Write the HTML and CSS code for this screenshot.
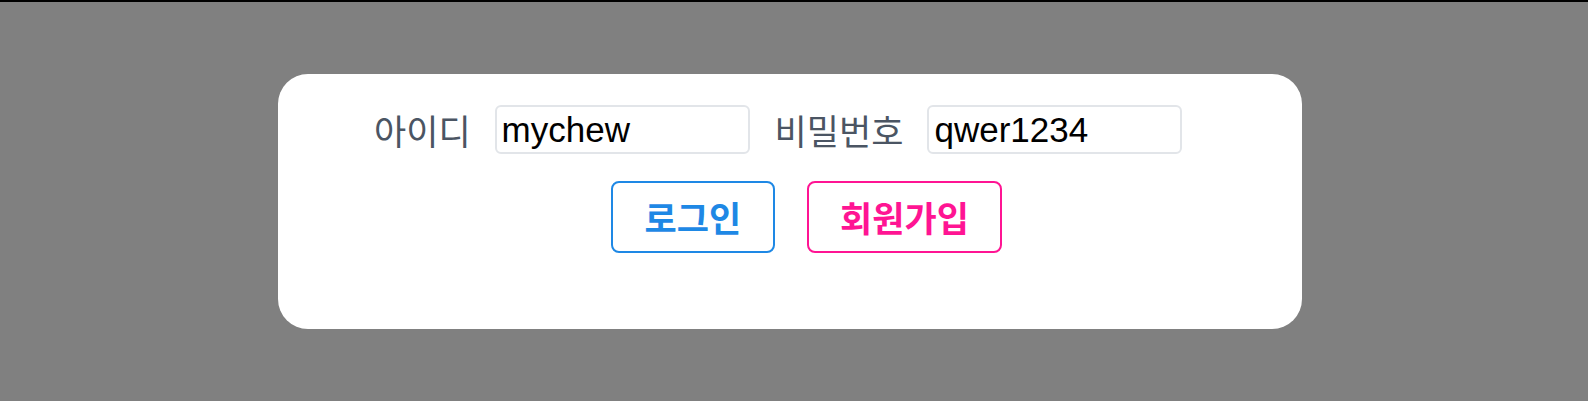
FILE: index.html
```html
<!DOCTYPE html>
<html lang="ko">
<head>
<meta charset="utf-8">
<title>로그인</title>
<link rel="stylesheet" href="styles.css">
</head>
<body>
<div class="topbar"></div>
<main class="stage">
  <form class="card">
    <div class="fields">
      <label class="field">
        <span class="field-label">아이디</span>
        <input class="field-input" type="text" value="mychew">
      </label>
      <label class="field">
        <span class="field-label">비밀번호</span>
        <input class="field-input" type="text" value="qwer1234">
      </label>
    </div>
    <div class="actions">
      <button type="button" class="btn btn-login">로그인</button>
      <button type="button" class="btn btn-signup">회원가입</button>
    </div>
  </form>
</main>
</body>
</html>
```

FILE: styles.css
```css
html, body {
  margin: 0;
  padding: 0;
}

body {
  background: #808080;
  font-family: "Liberation Sans", "Noto Sans CJK KR", sans-serif;
  height: 401px;
  overflow: hidden;
}

.topbar {
  height: 2px;
  background: #000;
}

.stage {
  padding: 72px 0 0 278px;
}

.card {
  box-sizing: border-box;
  width: 1024px;
  height: 255px;
  background: #fff;
  border-radius: 30px;
  padding: 31px 0 0 0;
}

.fields {
  display: flex;
  align-items: center;
  padding-left: 96px;
}

.field {
  display: flex;
  align-items: center;
}

.field + .field {
  margin-left: 25px;
}

.field-label {
  font-family: "Noto Sans CJK KR", sans-serif;
  font-size: 35px;
  line-height: 40px;
  color: #4b5563;
  margin-right: 24px;
}

.field-input {
  box-sizing: border-box;
  width: 255px;
  height: 49px;
  border: 2px solid #e2e5e9;
  border-radius: 6px;
  padding: 0 5px;
  font-family: "Liberation Sans", sans-serif;
  font-size: 35px;
  color: #000;
  outline: none;
  margin: 0;
}

.actions {
  display: flex;
  gap: 32px;
  padding-left: 333px;
  margin-top: 27px;
}

.btn {
  box-sizing: border-box;
  height: 72px;
  padding: 0 31.5px;
  background: #fff;
  border: 2px solid;
  border-radius: 8px;
  font-family: "Noto Sans CJK KR", sans-serif;
  font-weight: 700;
  font-size: 35px;
  line-height: 40px;
  cursor: pointer;
  margin: 0;
}

.btn-login {
  color: #1e88e5;
  border-color: #1e88e5;
}

.btn-signup {
  color: #ff1493;
  border-color: #ff1493;
}
```
